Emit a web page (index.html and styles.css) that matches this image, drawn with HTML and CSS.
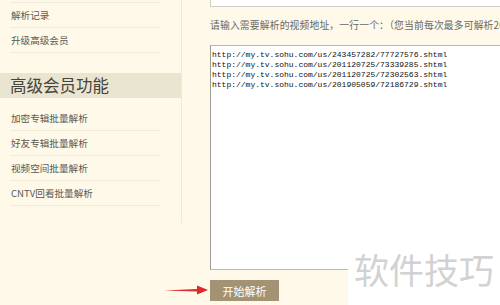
FILE: index.html
```html
<!DOCTYPE html>
<html lang="zh-CN">
<head>
    <meta charset="UTF-8">
    <title>批量解析</title>
    <link rel="stylesheet" href="styles.css">
</head>
<body>
    <div class="page">
        <div class="sidebar">
            <ul class="menu menu-top">
                <li>解析记录</li>
                <li>升级高级会员</li>
            </ul>
            <h2 class="menu-title">高级会员功能</h2>
            <ul class="menu">
                <li>加密专辑批量解析</li>
                <li>好友专辑批量解析</li>
                <li>视频空间批量解析</li>
                <li>CNTV回看批量解析</li>
            </ul>
        </div>
        <div class="main">
            <div class="prev-box"></div>
            <p class="notice">请输入需要解析的视频地址，一行一个：（您当前每次最多可解析20</p>
            <textarea class="urls" spellcheck="false">http://my.tv.sohu.com/us/243457282/77727576.shtml
http://my.tv.sohu.com/us/201120725/73339285.shtml
http://my.tv.sohu.com/us/201120725/72302563.shtml
http://my.tv.sohu.com/us/201905059/72186729.shtml</textarea>
            <button class="start-btn" type="button">开始解析</button>
        </div>
    </div>

    <!-- 标注箭头 -->
    <svg class="arrow" width="46" height="12" viewBox="0 0 46 12">
        <path d="M1 6.5 L34 5 L34 1.5 L45 6 L34 10.5 L34 7.5 Z" fill="#e0282a"/>
    </svg>

    <div class="watermark">软件技巧</div>
</body>
</html>
```

FILE: styles.css
```css
body {
    margin: 0;
    background: #fef9e9;
    font-family: "Noto Sans CJK SC", "Liberation Sans", sans-serif;
    overflow: hidden;
    width: 500px;
    height: 305px;
    position: relative;
}
.page {
    display: flex;
    align-items: flex-start;
}
.sidebar {
    width: 181px;
    height: 223px;
    border-right: 1px solid #efe8d4;
    flex-shrink: 0;
}
.menu {
    list-style: none;
    margin: 8px 21px 0 10px;
    padding: 0;
}
.menu-top {
    margin-top: 2px;
    border-top: 1px solid #f1ebd9;
}
.menu li {
    height: 24px;
    line-height: 24px;
    border-bottom: 1px solid #f1ebd9;
    font-size: 9.6px;
    color: #5a5750;
    padding-left: 1px;
}
.menu-title {
    margin: 20px 0 0 0;
    height: 25px;
    line-height: 25px;
    background: #e9e5d0;
    font-size: 16.5px;
    font-weight: 400;
    color: #46443c;
    padding-left: 10px;
}
.main {
    padding-left: 28px;
    width: 330px;
    flex-shrink: 0;
}
.prev-box {
    height: 6px;
    background: #fff;
    border: 1px solid #cfcdc6;
    border-top: none;
}
.notice {
    margin: 8px 0 0 0;
    line-height: 20px;
    font-size: 9.8px;
    letter-spacing: 0.15px;
    color: #6a6862;
    white-space: nowrap;
}
.urls {
    display: block;
    margin-top: 10px;
    width: 100%;
    height: 225px;
    box-sizing: border-box;
    border: 1px solid #b9b8b2;
    border-left-color: #9c9b96;
    background: #fff;
    padding: 4px 1px;
    font-family: "Liberation Mono", monospace;
    font-size: 8px;
    line-height: 10px;
    color: #111;
    resize: none;
    outline: none;
}
.start-btn {
    display: block;
    margin-top: 10px;
    width: 69px;
    height: 21px;
    padding: 0;
    border: none;
    background: #a39273;
    color: #fff;
    font-family: inherit;
    font-size: 11px;
    cursor: pointer;
}
.arrow {
    position: absolute;
    left: 163px;
    top: 284px;
}
.watermark {
    position: absolute;
    left: 348px;
    top: 243px;
    right: 0;
    bottom: 0;
    background: #fff;
    color: #d2d2d2;
    font-size: 35px;
    line-height: 52px;
    padding-left: 6px;
}
```
